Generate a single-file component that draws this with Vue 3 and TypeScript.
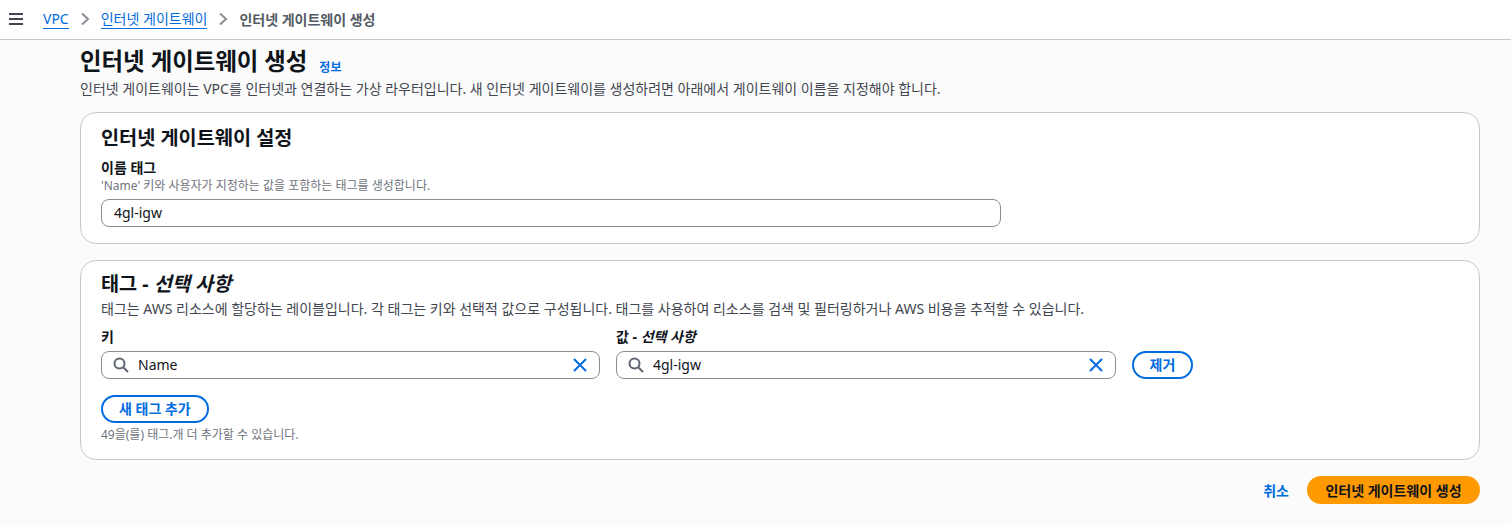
<template>
  <div class="page">
    <nav class="topbar">
      <svg class="menu" width="16" height="14" viewBox="0 0 16 14"><path d="M1 2h14M1 7h14M1 12h14" stroke="#424650" stroke-width="2" fill="none" /></svg>
      <a class="crumb">VPC</a>
      <svg class="chev" width="10" height="14" viewBox="0 0 10 14"><path d="M2 1.500 8 7l-6 5.500" stroke="#8c8c94" stroke-width="2" fill="none" /></svg>
      <a class="crumb">인터넷 게이트웨이</a>
      <svg class="chev" width="10" height="14" viewBox="0 0 10 14"><path d="M2 1.500 8 7l-6 5.500" stroke="#8c8c94" stroke-width="2" fill="none" /></svg>
      <span class="current">인터넷 게이트웨이 생성</span>
    </nav>

    <main class="content">
      <header class="head">
        <div class="title-row">
          <h1>인터넷 게이트웨이 생성</h1>
          <a class="info">정보</a>
        </div>
        <p class="desc">인터넷 게이트웨이는 VPC를 인터넷과 연결하는 가상 라우터입니다. 새 인터넷 게이트웨이를 생성하려면 아래에서 게이트웨이 이름을 지정해야 합니다.</p>
      </header>

      <section class="card first">
        <h2>인터넷 게이트웨이 설정</h2>
        <div class="label">이름 태그</div>
        <div class="hint">'Name' 키와 사용자가 지정하는 값을 포함하는 태그를 생성합니다.</div>
        <div class="input wide"><span class="val-text">4gl-igw</span></div>
      </section>

      <section class="card second">
        <h2>태그 - <em>선택 사항</em></h2>
        <p class="desc tagdesc">태그는 AWS 리소스에 할당하는 레이블입니다. 각 태그는 키와 선택적 값으로 구성됩니다. 태그를 사용하여 리소스를 검색 및 필터링하거나 AWS 비용을 추적할 수 있습니다.</p>
        <div class="tag-row">
          <div class="field" v-for="f in fields" :key="f.value">
            <div class="label"><template v-if="f.optional">값 - <em>선택 사항</em></template><template v-else>키</template></div>
            <div class="input search">
              <svg width="16" height="16" viewBox="0 0 16 16"><circle cx="6.500" cy="6.500" r="5" stroke="#5f6570" stroke-width="2" fill="none" /><path d="m10.500 10.500 4.500 4.500" stroke="#5f6570" stroke-width="2" fill="none" /></svg>
              <span class="val val-text">{{ f.value }}</span>
              <svg width="16" height="16" viewBox="0 0 16 16"><path d="m2 2 12 12M14 2 2 14" stroke="#006ce0" stroke-width="2" fill="none" /></svg>
            </div>
          </div>
          <button class="btn remove">제거</button>
        </div>
        <button class="btn add">새 태그 추가</button>
        <div class="hint left">49을(를) 태그.개 더 추가할 수 있습니다.</div>
      </section>

      <footer class="actions">
        <a class="cancel">취소</a>
        <button class="primary">인터넷 게이트웨이 생성</button>
      </footer>
    </main>
  </div>
</template>

<script setup lang="ts">
interface Field { value: string; optional: boolean }
const fields: Field[] = [
  { value: 'Name', optional: false },
  { value: '4gl-igw', optional: true },
]
</script>

<style>
html, body { margin: 0; background: #fafafa; }
</style>

<style scoped>
.page {
  width: 1511px;
  height: 526px;
  overflow: hidden;
  background: #fbfbfb;
  font-family: "Noto Sans", "Noto Sans CJK KR", sans-serif;
  font-size: 14px;
  color: #0f141a;
}
.topbar {
  height: 39px;
  background: #fff;
  border-bottom: 1px solid #c6c6cd;
  display: flex;
  align-items: center;
  padding-left: 8px;
}
.menu { margin-right: 19px; margin-top: -1px; }
.crumb {
  color: #006ce0;
  font-size: 14px;
  line-height: 18px;
  border-bottom: 1px solid #006ce0;
  margin-top: -1px;
}
.chev { margin: -1px 11px 0 11px; }
.current { color: #545b64; font-weight: 700; font-size: 14px; margin-top: -2px; }
.content { padding: 0 31px 0 80px; }
.head { padding-top: 6px; }
.title-row { display: flex; align-items: center; height: 30px; }
h1 { margin: 0; font-size: 23.400px; font-weight: 700; line-height: 30px; }
.info { color: #006ce0; font-size: 12px; font-weight: 700; margin-left: 12px; margin-top: 11px; }
.desc { margin: 3px 0 0; color: #424650; font-size: 14px; line-height: 20px; }
.card {
  background: #fff;
  border: 1px solid #c6c6cd;
  border-radius: 16px;
  padding: 0 20px;
  box-sizing: border-box;
}
.first { height: 132px; margin-top: 13px; padding-top: 12px; }
.second { height: 200px; margin-top: 16px; padding-top: 10px; }
h2 { margin: 0; font-size: 19.700px; line-height: 26px; font-weight: 700; }
em { font-style: italic; }
.label { font-size: 14px; font-weight: 700; line-height: 20px; }
.first .label { margin-top: 7px; }
.hint { color: #70747c; font-size: 12px; line-height: 16px; }
.input {
  height: 28px;
  box-sizing: border-box;
  border: 1px solid #8c8c94;
  border-radius: 8px;
  background: #fff;
  display: flex;
  align-items: center;
  font-size: 14px;
}
.val-text { padding-bottom: 2px; }
.wide { width: 900px; padding-left: 12px; margin-top: 5px; }
.tagdesc { margin-top: 2px; }
.tag-row { display: flex; align-items: flex-end; gap: 16px; margin-top: 8px; }
.field { width: 499px; }
.field + .field { width: 500px; }
.field .label { margin-bottom: 4px; }
.search { padding: 0 11px; }
.val { flex: 1; margin-left: 9px; }
.btn {
  font: inherit;
  font-weight: 700;
  font-size: 14px;
  color: #006ce0;
  background: #fff;
  border: 2px solid #006ce0;
  border-radius: 14px;
  height: 28px;
  padding: 0 16px;
  box-sizing: border-box;
  line-height: 1;
}
.remove { width: 61px; padding: 0; }
.add { display: block; margin-top: 16px; }
.left { margin-top: 4px; }
.actions {
  display: flex;
  justify-content: flex-end;
  align-items: center;
  gap: 18px;
  margin-top: 16px;
}
.cancel { color: #006ce0; font-weight: 700; font-size: 14px; }
.primary {
  font: inherit;
  font-weight: 700;
  font-size: 14px;
  color: #0f141a;
  background: #ff9900;
  border: none;
  border-radius: 14px;
  height: 28px;
  width: 173px;
  padding: 0;
}
</style>
